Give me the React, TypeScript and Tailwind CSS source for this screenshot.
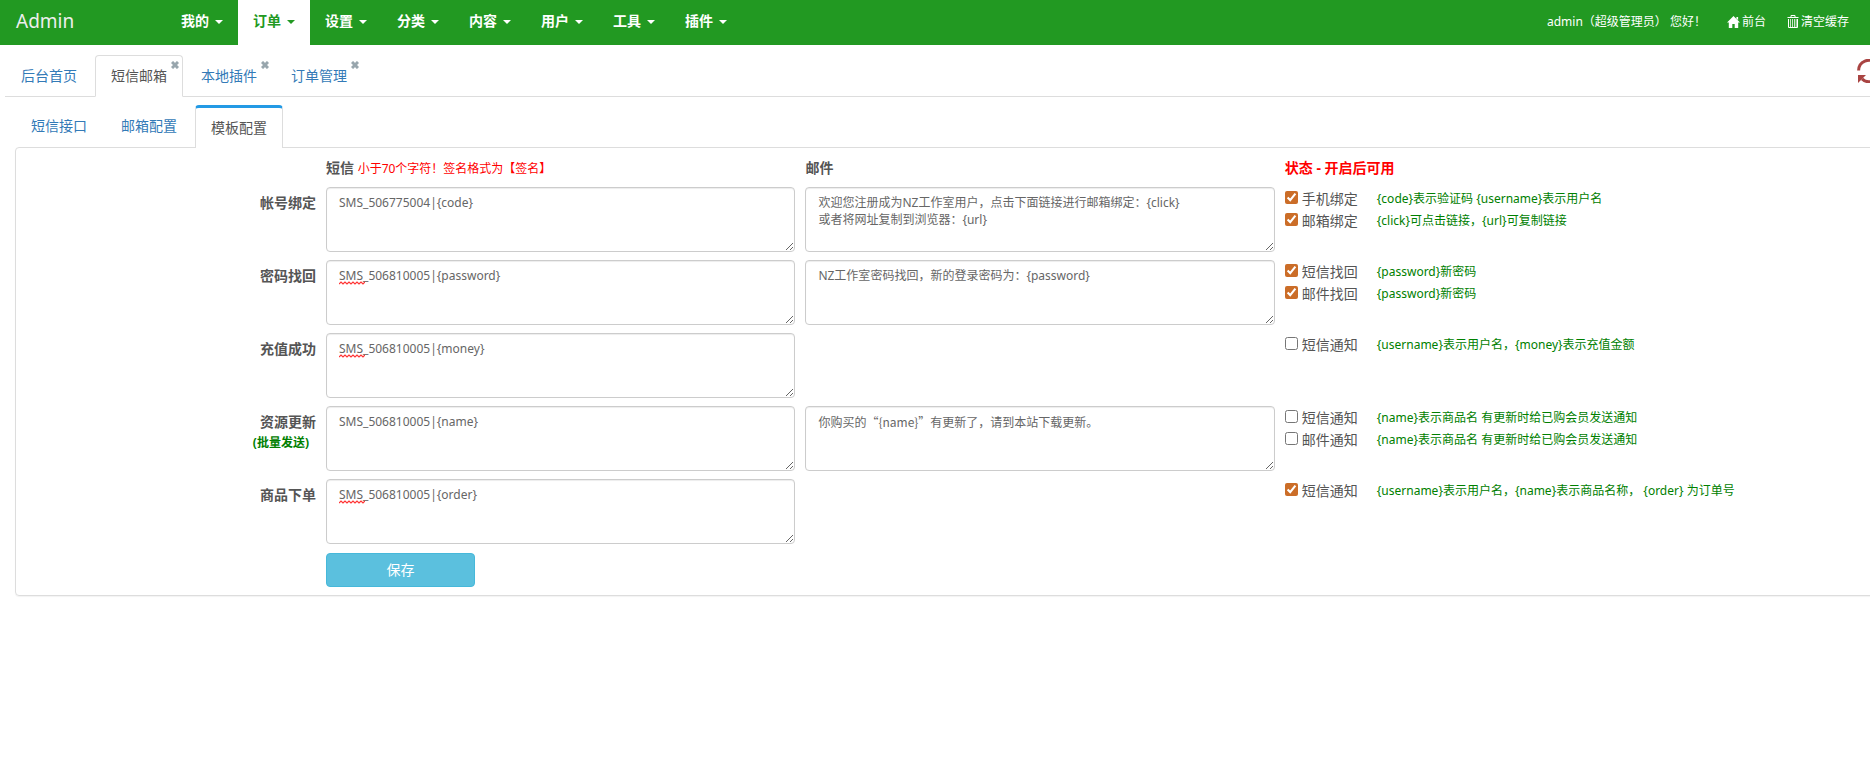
import type { ReactNode } from "react";

const menus = ["我的", "订单", "设置", "分类", "内容", "用户", "工具", "插件"];

const pageTabs = [
  { name: "后台首页", closable: false },
  { name: "短信邮箱", closable: true },
  { name: "本地插件", closable: true },
  { name: "订单管理", closable: true },
];

type Option = { name: string; hint: string; checked: boolean };

type Template = {
  title: string;
  note?: string;
  sms: string;
  misspelled?: boolean;
  mail?: string;
  options: Option[];
};

const templates: Template[] = [
  {
    title: "帐号绑定",
    sms: "SMS_506775004|{code}",
    mail: "欢迎您注册成为NZ工作室用户，点击下面链接进行邮箱绑定：{click}\n或者将网址复制到浏览器：{url}",
    options: [
      { name: "手机绑定", hint: "{code}表示验证码 {username}表示用户名", checked: true },
      { name: "邮箱绑定", hint: "{click}可点击链接，{url}可复制链接", checked: true },
    ],
  },
  {
    title: "密码找回",
    sms: "SMS_506810005|{password}",
    misspelled: true,
    mail: "NZ工作室密码找回，新的登录密码为：{password}",
    options: [
      { name: "短信找回", hint: "{password}新密码", checked: true },
      { name: "邮件找回", hint: "{password}新密码", checked: true },
    ],
  },
  {
    title: "充值成功",
    sms: "SMS_506810005|{money}",
    misspelled: true,
    options: [{ name: "短信通知", hint: "{username}表示用户名，{money}表示充值金额", checked: false }],
  },
  {
    title: "资源更新",
    note: "(批量发送)",
    sms: "SMS_506810005|{name}",
    mail: "你购买的“{name}”有更新了，请到本站下载更新。",
    options: [
      { name: "短信通知", hint: "{name}表示商品名 有更新时给已购会员发送通知", checked: false },
      { name: "邮件通知", hint: "{name}表示商品名 有更新时给已购会员发送通知", checked: false },
    ],
  },
  {
    title: "商品下单",
    sms: "SMS_506810005|{order}",
    misspelled: true,
    options: [{ name: "短信通知", hint: "{username}表示用户名，{name}表示商品名称， {order} 为订单号", checked: true }],
  },
];

function HomeIcon() {
  return (
    <svg viewBox="0 0 13 12" className="w-[13px] h-3" fill="currentColor" aria-hidden="true">
      <path d="M6.5 0 13 6.6h-1.8V12H7.7V8H5.3v4H1.8V6.6H0L6.5 0Z" />
      <path d="M9.4 1h1.7v3.2L9.4 2.5Z" />
    </svg>
  );
}

function TrashIcon() {
  return (
    <svg viewBox="0 0 12 14" className="w-3 h-[14px]" fill="none" stroke="currentColor" aria-hidden="true">
      <path d="M4 2V.5h4V2M.5 2.5h11M1.5 4v8.5h9V4" />
      <path d="M3.5 4v8M5.5 4v8M7.5 4v8M9.2 4v8" strokeOpacity="0.75" />
    </svg>
  );
}

function LogoutIcon() {
  return (
    <svg viewBox="0 0 12 12" className="w-3 h-3" fill="none" stroke="currentColor" strokeWidth="2" aria-hidden="true">
      <path d="M3.5 2.2a5 5 0 1 0 5 0M6 0v6" />
    </svg>
  );
}

function RefreshIcon() {
  return (
    <svg viewBox="0 0 24 24" className="w-6 h-6" fill="none" stroke="currentColor" strokeWidth="3" aria-hidden="true">
      <path d="M1.6 11.5A10.3 10.3 0 0 1 19 4.2M22.4 12.5A10.3 10.3 0 0 1 5 19.8" />
      <path d="M23 0v8h-8ZM1 24v-8h8Z" fill="currentColor" stroke="none" />
    </svg>
  );
}

function CloseIcon() {
  return (
    <svg viewBox="0 0 8 8" className="w-2 h-2" stroke="currentColor" strokeWidth="3" aria-hidden="true">
      <path d="M1 1l6 6M7 1 1 7" />
    </svg>
  );
}

function TopLink({ icon, children }: { icon: ReactNode; children?: ReactNode }) {
  return (
    <a href="#" className="flex items-center gap-[2px]">
      {icon}
      {children}
    </a>
  );
}

function Message({ label, value, misspelled }: { label: string; value: string; misspelled?: boolean }) {
  // curly quotes are full width only in the CJK font
  const quoted = value.includes("“");
  return (
    <div className="relative px-[5px]">
      <textarea
        rows={3}
        aria-label={label}
        defaultValue={value}
        spellCheck={false}
        className={
          quoted
            ? "block w-full rounded border border-[#ccc] px-3 py-[6px] font-['Noto_Sans_CJK_SC',sans-serif] text-xs leading-[17px] text-[#666] shadow-[inset_0_1px_1px_rgba(0,0,0,0.075)]"
            : "block w-full rounded border border-[#ccc] px-3 py-[6px] text-xs leading-[17px] text-[#666] shadow-[inset_0_1px_1px_rgba(0,0,0,0.075)]"
        }
      />
      {misspelled && (
        <svg viewBox="0 0 26 4" className="absolute left-[18px] top-[21px] w-[26px] h-1" fill="none" stroke="#f33" aria-hidden="true">
          <path d="M0 3l2-2 2 2 2-2 2 2 2-2 2 2 2-2 2 2 2-2 2 2 2-2 2 2 2-2" strokeWidth="1.2" />
        </svg>
      )}
    </div>
  );
}

function TemplateRow({ item }: { item: Template }) {
  return (
    <div className="grid grid-cols-[305px_3fr_3fr_4fr] mb-2">
      <div className="pt-[6px] pr-[5px] text-right font-bold leading-5">
        {item.title}
        {item.note && <div className="pr-[7px] text-xs leading-[22px] text-[#008000]">{item.note}</div>}
      </div>
      <Message label={item.title + "短信"} value={item.sms} misspelled={item.misspelled} />
      {item.mail ? <Message label={item.title + "邮件"} value={item.mail} /> : <div />}
      <div className="px-[5px] pt-px">
        {item.options.map((option) => (
          <div key={option.name} className="flex items-center h-[22px]">
            <label className="flex items-center gap-1">
              <input type="checkbox" defaultChecked={option.checked} className="mb-[3px] w-[13px] h-[13px] accent-[#cb6d28]" />
              {option.name}
            </label>
            <span className="ml-[19px] text-xs text-[#008000]">{option.hint}</span>
          </div>
        ))}
      </div>
    </div>
  );
}

export default function App() {
  return (
    <div className="overflow-hidden min-h-screen bg-white text-sm text-[#555] font-['Noto_Sans','Noto_Sans_CJK_SC',sans-serif]">
      <div className="-mr-[50px]">
        {/* 顶部导航 */}
        <header className="flex items-center h-[45px] bg-[#229922] text-white">
          <a href="#" className="w-[166px] shrink-0 pl-4 pb-px text-[19px] text-[#eee]">
            Admin
          </a>
          <nav className="flex h-full">
            {menus.map((menu) => (
              <button
                key={menu}
                type="button"
                className={
                  menu === "订单"
                    ? "flex items-center gap-[6px] w-[72px] pl-[15px] pb-[3px] font-bold bg-white text-[#229922]"
                    : "flex items-center gap-[6px] w-[72px] pl-[15px] pb-[3px] font-bold"
                }
              >
                {menu}
                <svg viewBox="0 0 8 4" className="w-2 h-1 mt-[2px]" fill="currentColor" aria-hidden="true">
                  <path d="M0 0h8L4 4Z" />
                </svg>
              </button>
            ))}
          </nav>
          <div className="flex items-center gap-[21px] ml-auto pr-[38px] pb-[2px] text-xs">
            <span>admin（超级管理员） 您好！</span>
            <TopLink icon={<HomeIcon />}>前台</TopLink>
            <TopLink icon={<TrashIcon />}>清空缓存</TopLink>
            <TopLink icon={<LogoutIcon />} />
          </div>
        </header>

        {/* 页面标签 */}
        <div className="flex mt-[10px] ml-[5px] border-b border-[#ddd]">
          {pageTabs.map((tab) => (
            <div
              key={tab.name}
              className={
                tab.name === "短信邮箱"
                  ? "relative mr-[2px] -mb-px rounded-t border border-b-white border-[#ddd] bg-white"
                  : "relative mr-[2px] -mb-px border border-transparent"
              }
            >
              <a
                href="#"
                className={
                  tab.name === "短信邮箱"
                    ? "block px-[15px] py-[10px] leading-5 text-[#555]"
                    : "block px-[15px] py-[10px] leading-5 text-[#337ab7]"
                }
              >
                {tab.name}
              </a>
              {tab.closable && (
                <button type="button" aria-label={"关闭" + tab.name} className="absolute right-[3px] top-[5px] text-[#98a6ad]">
                  <CloseIcon />
                </button>
              )}
            </div>
          ))}
          <button type="button" aria-label="刷新" className="ml-auto mr-[39px] mb-[10px] text-[#a94442]">
            <RefreshIcon />
          </button>
        </div>

        {/* 配置标签 */}
        <div className="flex items-start mt-2 ml-[15px]">
          <a href="#" className="mr-[2px] px-4 py-[11px] leading-5 text-[#337ab7]">短信接口</a>
          <a href="#" className="mr-[2px] px-4 py-[11px] leading-5 text-[#337ab7]">邮箱配置</a>
          <a
            href="#"
            className="relative -mb-px rounded-t border-x border-t-[3px] border-[#ddd] border-t-[#239ae5] bg-white px-[15px] py-[10px] leading-5 text-[#555]"
          >
            模板配置
          </a>
        </div>

        <form className="ml-[15px] rounded border border-[#ddd] pt-[10px] pb-2 shadow-[0_1px_1px_rgba(0,0,0,0.05)]">
          <div className="grid grid-cols-[305px_3fr_3fr_4fr] mb-[9px] leading-5 font-bold">
            <div />
            <div className="px-[5px]">
              短信 <span className="text-xs font-normal text-[#f00]">小于70个字符！签名格式为【签名】</span>
            </div>
            <div className="px-[5px]">邮件</div>
            <div className="px-[5px] text-[#f00]">状态 - 开启后可用</div>
          </div>
          {templates.map((item) => (
            <TemplateRow key={item.title} item={item} />
          ))}
          <button
            type="button"
            className="block ml-[310px] mt-[9px] w-[149px] h-[34px] rounded border border-[#46b8da] bg-[#5bc0de] text-white"
          >
            保存
          </button>
        </form>
      </div>
    </div>
  );
}
